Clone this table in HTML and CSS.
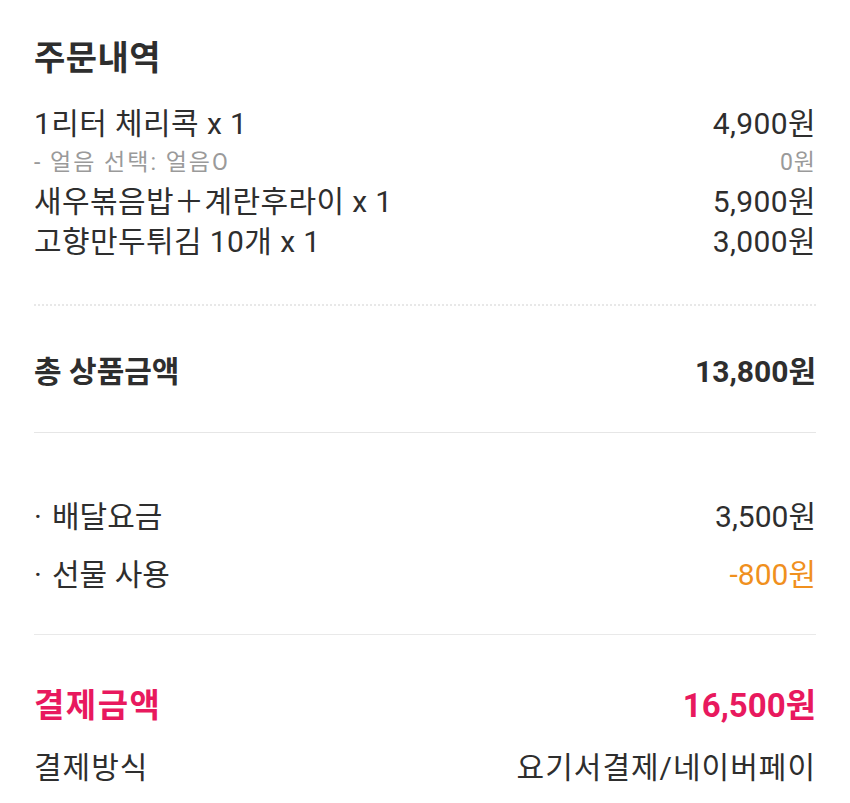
FILE: index.html
```html
<!DOCTYPE html>
<html lang="ko">
	<head>
		<meta charset="utf-8" />
		<title>주문내역</title>
		<link rel="stylesheet" href="styles.css">
	</head>
	<body>
		<div class="receipt">
			<h1 class="title">주문내역</h1>

			<ul class="items">
				<li class="row"><span>1리터 체리콕 x 1</span><span>4,900원</span></li>
				<li class="row option"><span>- 얼음 선택: 얼음O</span><span>0원</span></li>
				<li class="row"><span>새우볶음밥＋계란후라이 x 1</span><span>5,900원</span></li>
				<li class="row"><span>고향만두튀김 10개 x 1</span><span>3,000원</span></li>
			</ul>

			<div class="row total">
				<span>총 상품금액</span><span>13,800원</span>
			</div>

			<ul class="fees">
				<li class="row"><span><i class="dot">·</i>배달요금</span><span>3,500원</span></li>
				<li class="row"><span><i class="dot">·</i>선물 사용</span><span class="discount">-800원</span></li>
			</ul>

			<div class="row pay">
				<span>결제금액</span><span>16,500원</span>
			</div>
			<div class="row method">
				<span>결제방식</span><span>요기서결제/네이버페이</span>
			</div>
		</div>
	</body>
</html>
```

FILE: styles.css
```css
body {
	background: #fff;
	color: #2e2e2e;
	font-family: Roboto, "Noto Sans CJK KR", sans-serif;
	margin: 0;
	padding: 0;
}
ul {
	list-style-type: none;
	margin: 0;
	padding: 0;
}


/* Receipt */
.receipt { padding: 38px 34px 0; }
.title {
	font-size: 34px;
	font-weight: 700;
	letter-spacing: 0.5px;
	line-height: 40px;
	margin: 0 0 23px;
}
.row {
	align-items: center;
	display: flex;
	font-size: 30px;
	justify-content: space-between;
	white-space: nowrap;
}
.items {
	border-bottom: 2px dotted #e8e8e8;
	padding-bottom: 45px;
}
.items .row {
	height: 40px;
	letter-spacing: 0.4px;
}
.items .option {
	color: #9a9a9a;
	font-size: 23px;
	height: 38px;
	letter-spacing: 2px;
}
.option span:last-child { letter-spacing: 1px; }
.total {
	border-bottom: 1px solid #e6e6e6;
	font-weight: 700;
	height: 126px;
}
.fees {
	border-bottom: 1px solid #e9e9e9;
	padding: 52px 0 33px;
}
.fees .row { height: 58px; }
.fees .dot {
	display: inline-block;
	font-style: normal;
	width: 18px;
}
.fees .discount { color: #f0901e; }
.pay {
	color: #e8195e;
	font-size: 33px;
	font-weight: 700;
	height: 60px;
	margin-top: 38px;
}
.pay span:first-child { letter-spacing: 1.5px; }
.method {
	height: 64px;
	letter-spacing: 1px;
}
```
